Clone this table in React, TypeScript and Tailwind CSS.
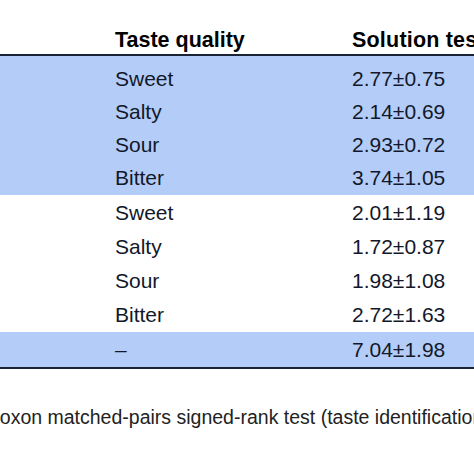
const firstGroup = [
  { taste: "Sweet", value: "2.77±0.75" },
  { taste: "Salty", value: "2.14±0.69" },
  { taste: "Sour", value: "2.93±0.72" },
  { taste: "Bitter", value: "3.74±1.05" },
];

const secondGroup = [
  { taste: "Sweet", value: "2.01±1.19" },
  { taste: "Salty", value: "1.72±0.87" },
  { taste: "Sour", value: "1.98±1.08" },
  { taste: "Bitter", value: "2.72±1.63" },
];

function Row({ taste, value, tall }: { taste: string; value: string; tall?: boolean }) {
  return (
    <div
      className={`grid grid-cols-[115px_237px_1fr] whitespace-nowrap ${
        tall ? "h-[35px] leading-[35px]" : "h-[34px] leading-[34px]"
      }`}
    >
      <div />
      <div>{taste}</div>
      <div>{value}</div>
    </div>
  );
}

export default function App() {
  return (
    <div
      className="w-[474px] h-[474px] overflow-hidden bg-white text-[21px] text-[#12182a]"
      style={{ fontFamily: '"Liberation Sans", Arial, sans-serif' }}
    >
      {/* Header */}
      <div className="grid grid-cols-[115px_237px_1fr] pt-[28px] pb-[2px] h-[56px] leading-[24px] text-[21.5px] font-bold text-black whitespace-nowrap border-b-2 border-[#1a2235]">
        <div />
        <div>Taste quality</div>
        <div className="overflow-hidden tracking-[0.2px]">Solution test</div>
      </div>

      {/* Highlighted group */}
      <div className="bg-[#b4cdf8] pt-[6px] pb-[1px]">
        {firstGroup.map((r) => (
          <div key={r.taste} className="grid grid-cols-[115px_237px_1fr] h-[33px] leading-[33px] whitespace-nowrap">
            <div />
            <div>{r.taste}</div>
            <div>{r.value}</div>
          </div>
        ))}
      </div>

      {/* Plain group */}
      <div className="pt-[1px]">
        {secondGroup.map((r) => (
          <Row key={r.taste} taste={r.taste} value={r.value} />
        ))}
      </div>

      {/* Total row */}
      <div className="bg-[#b4cdf8] border-b-2 border-[#1a2235]">
        <Row taste="–" value="7.04±1.98" tall />
      </div>

      {/* Footnote */}
      <div className="mt-[36px] ml-[-37px] leading-[24px] text-[19.5px] whitespace-nowrap text-[#222]">
        Wilcoxon matched-pairs signed-rank test (taste identification
      </div>
    </div>
  );
}
